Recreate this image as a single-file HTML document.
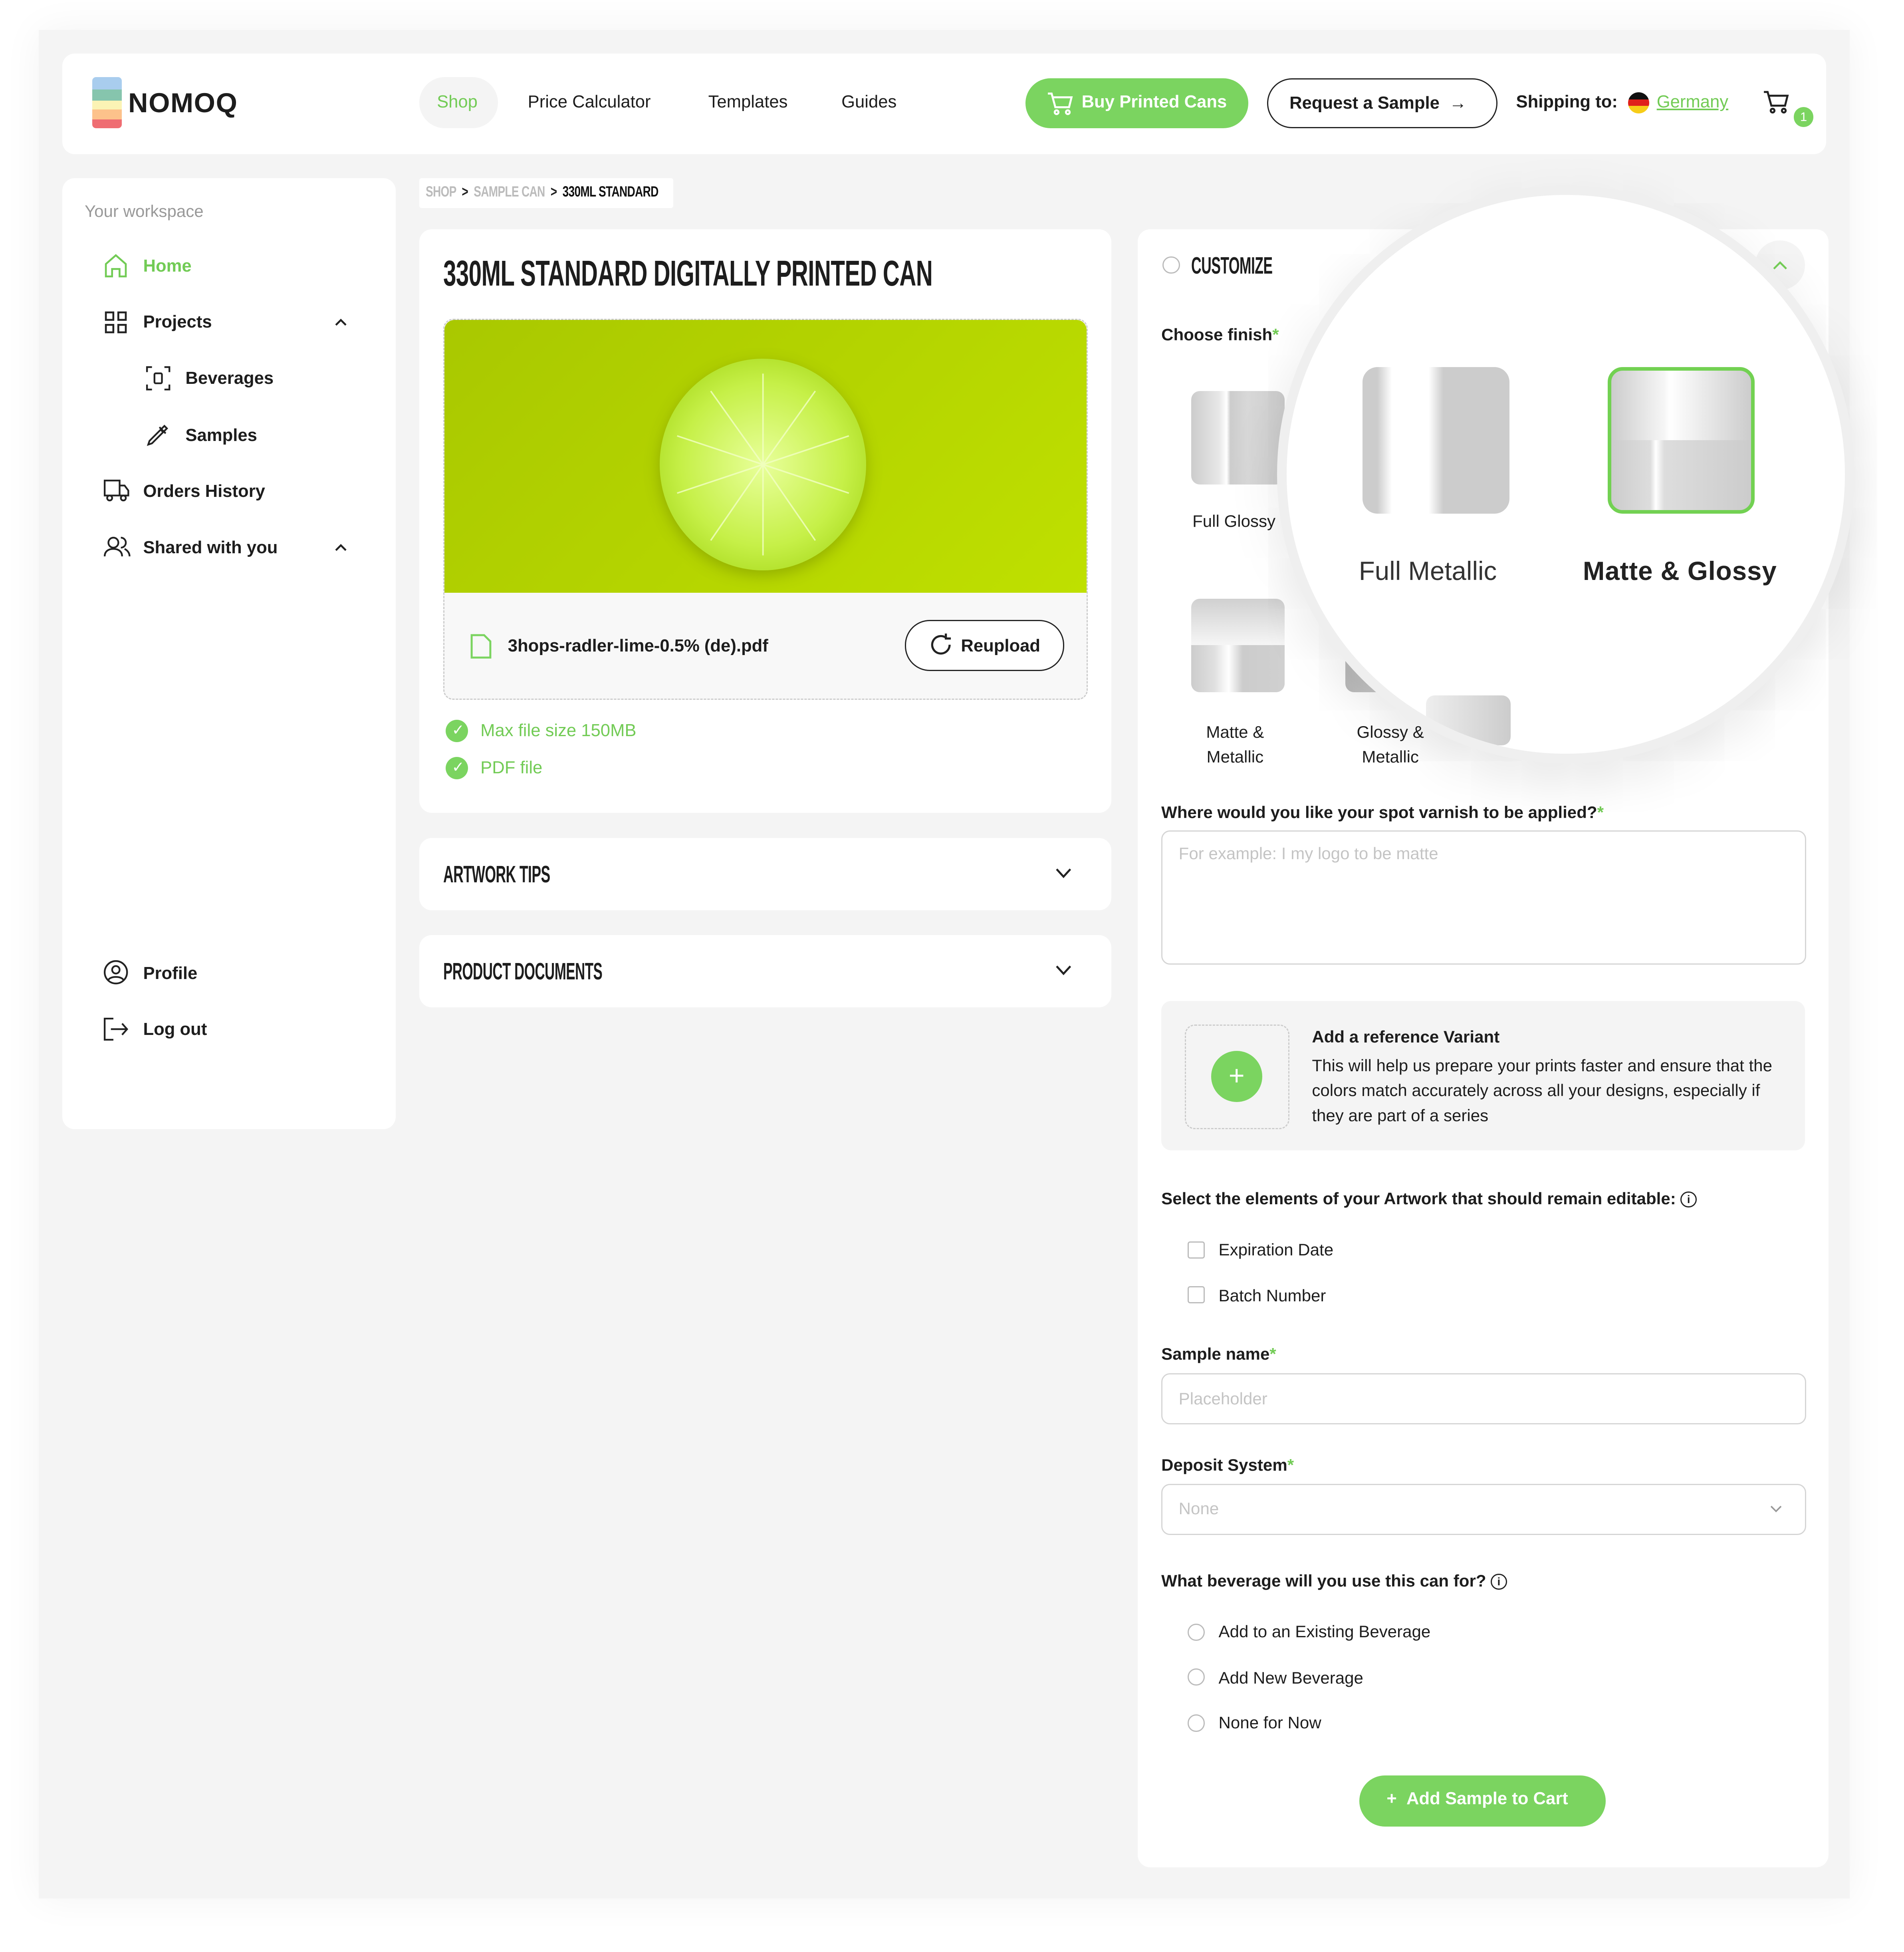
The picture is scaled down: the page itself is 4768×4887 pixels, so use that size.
<!DOCTYPE html>
<html><head><meta charset="utf-8"><style>
html,body{margin:0;padding:0;background:#fff;width:4768px;height:4887px;overflow:hidden}
#w{position:absolute;left:0;top:0;width:1526px;height:1564px;zoom:3.117;font-family:"Liberation Sans",sans-serif;color:#1d1d1d;font-size:14px}
.a{position:absolute}
.card{position:absolute;background:#fff;border-radius:10px}
.h{font-family:"Liberation Sans Narrow","Liberation Sans",sans-serif;font-weight:bold;letter-spacing:-0.3px;transform-origin:left center}
.g{color:#72cb55}
.nav{font-size:14px;top:74px}
.lbl{font-size:13.5px;font-weight:bold}
.inp{position:absolute;left:933px;width:516px;border:1px solid #d5d5d5;border-radius:7px;background:#fff;color:#c4c4c4;font-size:13.5px}
.cb{position:absolute;width:12px;height:12px;border:1px solid #bbb;border-radius:2px;left:954px}
.rd{position:absolute;width:12px;height:12px;border:1px solid #bbb;border-radius:50%;left:954px}
.sw{position:absolute;border-radius:7px;overflow:hidden}
.chk{position:absolute;left:358px;width:18px;height:18px;border-radius:50%;background:#7bd460}
</style></head><body><div id="w">
<div class="a" style="left:31px;top:24px;width:1455px;height:1501px;background:#f4f4f4;box-shadow:0 0 30px rgba(0,0,0,0.05)"></div>

<!-- header -->
<div class="card" style="left:50px;top:43px;width:1417px;height:81px"></div>
<div class="a" style="left:74px;top:62px;width:24px;height:41px;border-radius:3px;overflow:hidden">
 <div style="height:10px;background:#a9cdee"></div><div style="height:9px;background:#86c5ad"></div><div style="height:7px;background:#fbf3b5"></div><div style="height:8px;background:#fdc28b"></div><div style="height:7px;background:#ef6d72"></div></div>
<div class="a" style="left:103px;top:70px;font-size:22px;font-weight:bold;letter-spacing:0.5px">NOMOQ</div>
<div class="a" style="left:337px;top:62px;width:63px;height:41px;border-radius:21px;background:#f4f4f4"></div>
<div class="a nav g" style="left:351px">Shop</div>
<div class="a nav" style="left:424px">Price Calculator</div>
<div class="a nav" style="left:569px">Templates</div>
<div class="a nav" style="left:676px">Guides</div>
<div class="a" style="left:824px;top:63px;width:179px;height:40px;border-radius:20px;background:#7bd460;color:#fff;font-size:14px;font-weight:bold">
 <svg class="a" style="left:17px;top:10px" width="22" height="20" viewBox="0 0 22 20" fill="none" stroke="#fff" stroke-width="1.6"><path d="M1 2h3l3 11h11l2-8H5.5"/><circle cx="8" cy="17" r="1.5"/><circle cx="17" cy="17" r="1.5"/></svg>
 <span class="a" style="left:45px;top:11px">Buy Printed Cans</span></div>
<div class="a" style="left:1018px;top:63px;width:183px;height:38px;border-radius:20px;border:1px solid #222;font-size:14px;font-weight:bold"><span class="a" style="left:17px;top:11px">Request a Sample &nbsp;→</span></div>
<div class="a" style="left:1218px;top:74px;font-size:14px;font-weight:bold">Shipping to:</div>
<div class="a" style="left:1308px;top:74px;width:17px;height:17px;border-radius:50%;overflow:hidden"><div style="height:6px;background:#111"></div><div style="height:5px;background:#e0201b"></div><div style="height:6px;background:#f7cd18"></div></div>
<div class="a g" style="left:1331px;top:74px;font-size:14px;text-decoration:underline">Germany</div>
<svg class="a" style="left:1416px;top:72px" width="24" height="22" viewBox="0 0 24 22" fill="none" stroke="#222" stroke-width="1.6"><path d="M1 2h3l3 11h11l2-8H5.5"/><circle cx="8" cy="17" r="1.5"/><circle cx="17" cy="17" r="1.5"/></svg>
<div class="a" style="left:1441px;top:86px;width:16px;height:16px;border-radius:50%;background:#7bd460;color:#fff;font-size:10px;text-align:center;line-height:16px">1</div>

<!-- sidebar -->
<div class="card" style="left:50px;top:143px;width:268px;height:764px"></div>
<div class="a" style="left:68px;top:162px;color:#999;font-size:13.5px">Your workspace</div>
<svg class="a" style="left:84px;top:204px" width="18" height="19" viewBox="0 0 18 19" fill="none" stroke="#72cb55" stroke-width="1.5"><path d="M1 18V8l8-7 8 7v10h-5v-6H6v6z"/></svg>
<div class="a g" style="left:115px;top:206px;font-size:14px;font-weight:bold">Home</div>
<svg class="a" style="left:84px;top:250px" width="18" height="18" viewBox="0 0 18 18" fill="none" stroke="#222" stroke-width="1.5"><rect x="1" y="1" width="6" height="6"/><rect x="11" y="1" width="6" height="6"/><rect x="1" y="11" width="6" height="6"/><rect x="11" y="11" width="6" height="6"/></svg>
<div class="a" style="left:115px;top:251px;font-size:14px;font-weight:bold">Projects</div>
<svg class="a" style="left:269px;top:255px" width="10" height="7" viewBox="0 0 10 7" fill="none" stroke="#222" stroke-width="1.5"><path d="M1 6l4-4 4 4"/></svg>
<svg class="a" style="left:117px;top:294px" width="20" height="20" viewBox="0 0 20 20" fill="none" stroke="#222" stroke-width="1.4"><path d="M1 5V1h4M15 1h4v4M19 15v4h-4M5 19H1v-4"/><rect x="7" y="6" width="6" height="8" rx="1"/></svg>
<div class="a" style="left:149px;top:296px;font-size:14px;font-weight:bold">Beverages</div>
<svg class="a" style="left:117px;top:339px" width="20" height="20" viewBox="0 0 20 20" fill="none" stroke="#222" stroke-width="1.4"><path d="M2 18l3-1 9-9-2-2-9 9zM12 6l3-3 2 2-3 3M11 4l5 5"/></svg>
<div class="a" style="left:149px;top:342px;font-size:14px;font-weight:bold">Samples</div>
<svg class="a" style="left:83px;top:385px" width="21" height="18" viewBox="0 0 21 18" fill="none" stroke="#222" stroke-width="1.4"><path d="M1 1h12v12H1zM13 5h4l3 4v4h-7"/><circle cx="5" cy="15" r="2"/><circle cx="16" cy="15" r="2"/></svg>
<div class="a" style="left:115px;top:387px;font-size:14px;font-weight:bold">Orders History</div>
<svg class="a" style="left:83px;top:431px" width="22" height="17" viewBox="0 0 22 17" fill="none" stroke="#222" stroke-width="1.4"><circle cx="8" cy="5" r="4"/><path d="M1 16c0-4 3-6 7-6s7 2 7 6M14 1a4 4 0 010 8M17 10c2 1 4 3 4 6"/></svg>
<div class="a" style="left:115px;top:432px;font-size:14px;font-weight:bold">Shared with you</div>
<svg class="a" style="left:269px;top:436px" width="10" height="7" viewBox="0 0 10 7" fill="none" stroke="#222" stroke-width="1.5"><path d="M1 6l4-4 4 4"/></svg>
<svg class="a" style="left:83px;top:771px" width="20" height="20" viewBox="0 0 20 20" fill="none" stroke="#222" stroke-width="1.4"><circle cx="10" cy="10" r="9"/><circle cx="10" cy="8" r="3"/><path d="M4 16c2-3 10-3 12 0"/></svg>
<div class="a" style="left:115px;top:774px;font-size:14px;font-weight:bold">Profile</div>
<svg class="a" style="left:83px;top:817px" width="20" height="19" viewBox="0 0 20 19" fill="none" stroke="#222" stroke-width="1.4"><path d="M8 1H1v17h7M6 9.5h13M15 5l4 4.5-4 4.5"/></svg>
<div class="a" style="left:115px;top:819px;font-size:14px;font-weight:bold">Log out</div>

<!-- breadcrumb -->
<div class="a" style="left:337px;top:143px;width:204px;height:24px;background:#fff;border-radius:2px"></div>
<div class="a h" style="left:342px;top:147px;font-size:12px;color:#bbb;transform:scaleX(.75);white-space:nowrap">SHOP &nbsp;<span style="color:#222">&gt;</span>&nbsp; SAMPLE CAN &nbsp;<span style="color:#222">&gt;</span>&nbsp; <span style="color:#111">330ML STANDARD</span></div>

<!-- main card -->
<div class="card" style="left:337px;top:184px;width:556px;height:469px"></div>
<div class="a h" style="left:356px;top:203px;font-size:29px;transform:scaleX(.645);white-space:nowrap">330ML STANDARD DIGITALLY PRINTED CAN</div>
<div class="a" style="left:356px;top:256px;width:516px;height:304px;border:1px dashed #ccc;border-radius:8px;background:#f8f8f8"></div>
<div class="a" style="left:357px;top:257px;width:516px;height:219px;border-radius:8px 8px 0 0;background:linear-gradient(135deg,#a9c800,#bfe000);overflow:hidden">
 <div class="a" style="left:173px;top:31px;width:166px;height:170px;border-radius:50%;background:radial-gradient(circle,#e8ff9a 0%,#c6f048 55%,#a8d91c 85%,#e7ff9c 90%,#b5dc2a 100%);box-shadow:0 4px 12px rgba(80,100,0,.35)"></div>
 <svg class="a" style="left:173px;top:31px" width="166" height="170" viewBox="0 0 166 170" stroke="#f2ffc5" stroke-width="1.2" opacity=".8"><path d="M83 85L83 12M83 85L125 26M83 85L152 62M83 85L152 108M83 85L125 146M83 85L83 158M83 85L41 146M83 85L14 108M83 85L14 62M83 85L41 26"/></svg>
</div>
<svg class="a" style="left:378px;top:509px" width="17" height="20" viewBox="0 0 17 20" fill="none" stroke="#7bd460" stroke-width="1.6"><path d="M1 1h10l5 5v13H1z"/></svg>
<div class="a" style="left:408px;top:511px;font-size:14px;font-weight:bold">3hops-radler-lime-0.5% (de).pdf</div>
<div class="a" style="left:727px;top:498px;width:126px;height:39px;border:1px solid #222;border-radius:20px;background:#fff"></div>
<svg class="a" style="left:746px;top:508px" width="20" height="20" viewBox="0 0 20 20" fill="none" stroke="#222" stroke-width="1.7"><path d="M17 10a7 7 0 11-3-5.7M14 1v4h4"/></svg>
<div class="a" style="left:772px;top:511px;font-size:14px;font-weight:bold">Reupload</div>
<div class="chk" style="top:578px"></div><div class="a" style="left:363px;top:579px;color:#fff;font-size:12px">✓</div>
<div class="a g" style="left:386px;top:579px;font-size:14px">Max file size 150MB</div>
<div class="chk" style="top:608px"></div><div class="a" style="left:363px;top:609px;color:#fff;font-size:12px">✓</div>
<div class="a g" style="left:386px;top:609px;font-size:14px">PDF file</div>

<div class="card" style="left:337px;top:673px;width:556px;height:58px"></div>
<div class="a h" style="left:356px;top:691px;font-size:19px;transform:scaleX(.6);white-space:nowrap">ARTWORK TIPS</div>
<svg class="a" style="left:848px;top:697px" width="13" height="9" viewBox="0 0 13 9" fill="none" stroke="#222" stroke-width="1.6"><path d="M1 1l5.5 6L12 1"/></svg>
<div class="card" style="left:337px;top:751px;width:556px;height:58px"></div>
<div class="a h" style="left:356px;top:769px;font-size:19px;transform:scaleX(.59);white-space:nowrap">PRODUCT DOCUMENTS</div>
<svg class="a" style="left:848px;top:775px" width="13" height="9" viewBox="0 0 13 9" fill="none" stroke="#222" stroke-width="1.6"><path d="M1 1l5.5 6L12 1"/></svg>

<!-- right card -->
<div class="card" style="left:914px;top:184px;width:555px;height:1316px"></div>
<div class="a" style="left:934px;top:206px;width:12px;height:12px;border:1px solid #bbb;border-radius:50%"></div>
<div class="a h" style="left:957px;top:202px;font-size:19px;transform:scaleX(.6);white-space:nowrap">CUSTOMIZE</div>
<div class="a" style="left:1410px;top:193px;width:40px;height:40px;border-radius:50%;background:#f4f4f4"></div>
<div class="a lbl" style="left:933px;top:261px">Choose finish<span class="g">*</span></div>
<div class="sw" style="left:957px;top:314px;width:75px;height:75px;background:linear-gradient(90deg,#ccc 0%,#e8e8e8 30%,#fff 38%,#ccc 42%,#d8d8d8 60%,#ccc 100%)"></div>
<div class="a" style="left:958px;top:411px;font-size:13.5px">Full Glossy</div>
<div class="sw" style="left:957px;top:481px;width:75px;height:75px;background:linear-gradient(180deg,#d0d0d0,#f6f6f6 50%,#d2d2d2 50%,#ccc)"><div class="a" style="left:0;top:37px;width:75px;height:38px;background:linear-gradient(90deg,#ccc 0%,#e0e0e0 25%,#fff 40%,#ccc 55%,#d0d0d0 100%)"></div></div>
<div class="a" style="left:969px;top:578px;font-size:13.5px;text-align:center;line-height:20px">Matte &amp;<br>Metallic</div>
<div class="sw" style="left:1081px;top:481px;width:75px;height:75px;background:linear-gradient(90deg,#bbb,#ddd)"></div>
<div class="a" style="left:1090px;top:578px;font-size:13.5px;text-align:center;line-height:20px">Glossy &amp;<br>Metallic</div>
<div class="lbl a" style="left:933px;top:645px">Where would you like your spot varnish to be applied?<span class="g">*</span></div>
<div class="inp" style="top:667px;height:106px"><span class="a" style="left:13px;top:10px">For example: I my logo to be matte</span></div>
<div class="a" style="left:933px;top:804px;width:517px;height:120px;background:#f4f4f4;border-radius:8px"></div>
<div class="a" style="left:952px;top:823px;width:82px;height:82px;border:1px dashed #ccc;border-radius:8px"></div>
<div class="a" style="left:973px;top:844px;width:41px;height:41px;border-radius:50%;background:#7bd460;color:#fff;font-size:22px;text-align:center;line-height:40px">+</div>
<div class="a lbl" style="left:1054px;top:825px">Add a reference Variant</div>
<div class="a" style="left:1054px;top:846px;width:370px;font-size:13.5px;line-height:20px">This will help us prepare your prints faster and ensure that the colors match accurately across all your designs, especially if they are part of a series</div>
<div class="a lbl" style="left:933px;top:955px">Select the elements of your Artwork that should remain editable: <span style="display:inline-block;width:11px;height:11px;border:1px solid #222;border-radius:50%;font-size:9px;text-align:center;line-height:11px;vertical-align:1px">i</span></div>
<div class="cb" style="top:997px"></div><div class="a" style="left:979px;top:996px;font-size:13.5px">Expiration Date</div>
<div class="cb" style="top:1033px"></div><div class="a" style="left:979px;top:1033px;font-size:13.5px">Batch Number</div>
<div class="a lbl" style="left:933px;top:1080px">Sample name<span class="g">*</span></div>
<div class="inp" style="top:1103px;height:39px"><span class="a" style="left:13px;top:12px">Placeholder</span></div>
<div class="a lbl" style="left:933px;top:1169px">Deposit System<span class="g">*</span></div>
<div class="inp" style="top:1192px;height:39px"><span class="a" style="left:13px;top:11px">None</span><svg class="a" style="left:488px;top:16px" width="10" height="7" viewBox="0 0 10 7" fill="none" stroke="#999" stroke-width="1.2"><path d="M1 1l4 4 4-4"/></svg></div>
<div class="a lbl" style="left:933px;top:1262px">What beverage will you use this can for? <span style="display:inline-block;width:11px;height:11px;border:1px solid #222;border-radius:50%;font-size:9px;text-align:center;line-height:11px;vertical-align:1px">i</span></div>
<div class="rd" style="top:1304px"></div><div class="a" style="left:979px;top:1303px;font-size:13.5px">Add to an Existing Beverage</div>
<div class="rd" style="top:1340px"></div><div class="a" style="left:979px;top:1340px;font-size:13.5px">Add New Beverage</div>
<div class="rd" style="top:1377px"></div><div class="a" style="left:979px;top:1376px;font-size:13.5px">None for Now</div>
<div class="a" style="left:1092px;top:1426px;width:198px;height:41px;border-radius:21px;background:#7bd460;color:#fff;font-size:14px;font-weight:bold"><span class="a" style="left:22px;top:11px">+ &nbsp;Add Sample to Cart</span></div>

<!-- magnifier -->
<div class="a" style="left:1026px;top:149px;width:464px;height:464px;border-radius:50%;background:#fff;border:8px solid #efefef;box-sizing:border-box;box-shadow:0 12px 40px rgba(0,0,0,.12);overflow:hidden">
 <div class="sw" style="left:61px;top:138px;width:118px;height:118px;border-radius:12px;background:linear-gradient(90deg,#ccc 0%,#ccc 10%,#fff 20%,#fff 45%,#ccc 55%,#ccc 100%)"></div>
 <div class="a" style="left:58px;top:290px;font-size:21px;color:#333;white-space:nowrap">Full Metallic</div>
 <div class="sw" style="left:258px;top:138px;width:118px;height:118px;border-radius:12px;border:3px solid #72d152;box-sizing:border-box;background:linear-gradient(90deg,#ccc,#f6f6f6 38%,#fff 42%,#ccc)"><div class="a" style="left:0;top:56px;width:112px;height:56px;background:linear-gradient(90deg,#ccc,#ddd 28%,#fff 32%,#ddd 38%,#ccc)"></div></div>
 <div class="a" style="left:238px;top:290px;font-size:21px;font-weight:bold;color:#222;white-space:nowrap;letter-spacing:.3px">Matte &amp; Glossy</div>
 <div class="sw" style="left:112px;top:402px;width:68px;height:40px;background:linear-gradient(90deg,#eee,#ccc)"></div>
</div>
<svg class="a" style="left:1424px;top:209px" width="12" height="8" viewBox="0 0 12 8" fill="none" stroke="#72cb55" stroke-width="1.5"><path d="M1 7l5-5 5 5"/></svg>
</div></body></html>
